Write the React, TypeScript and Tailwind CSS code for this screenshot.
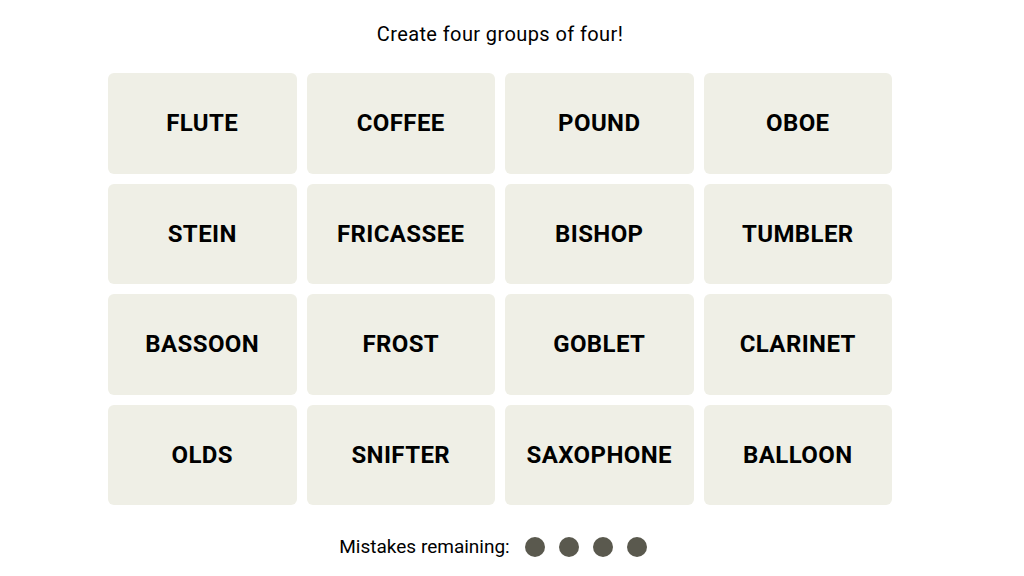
const words = [
  "FLUTE", "COFFEE", "POUND", "OBOE",
  "STEIN", "FRICASSEE", "BISHOP", "TUMBLER",
  "BASSOON", "FROST", "GOBLET", "CLARINET",
  "OLDS", "SNIFTER", "SAXOPHONE", "BALLOON",
];

export default function App() {
  return (
    <div className="w-[1000px] h-[576px] bg-white flex flex-col items-center font-['Roboto','Liberation_Sans',sans-serif] text-black">
      <div className="mt-[22px] text-[20px] leading-6 tracking-[0.4px]">Create four groups of four!</div>
      <div className="mt-[27px] w-[784px] grid grid-cols-4 auto-rows-[100.5px] gap-[10px]">
        {words.map((w) => (
          <button
            key={w}
            className="rounded-[6px] bg-[#efefe6] flex items-center justify-center text-[24px] font-bold tracking-[0.4px]"
          >
            {w}
          </button>
        ))}
      </div>
      <div className="mt-[32px] flex items-center h-5 pr-[14px]">
        <span className="text-[19px] leading-5 mr-[15px]">Mistakes remaining:</span>
        <div className="flex gap-[14px]">
          {[0, 1, 2, 3].map((i) => (
            <span key={i} className="w-5 h-5 rounded-full bg-[#5a594e]" />
          ))}
        </div>
      </div>
    </div>
  );
}
